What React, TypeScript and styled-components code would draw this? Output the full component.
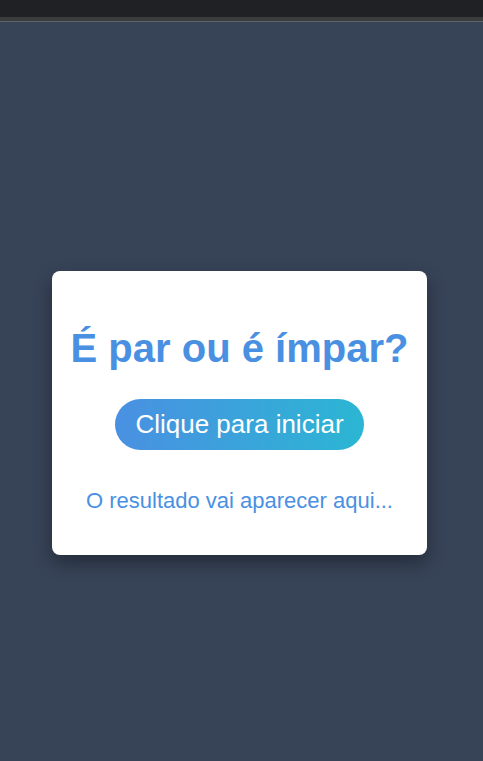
import React from "react";
import styled, { createGlobalStyle } from "styled-components";

const Global = createGlobalStyle`
  html, body { margin: 0; padding: 0; }
  body {
    background: #374357;
    font-family: "Liberation Sans", Arial, sans-serif;
    min-height: 761px;
  }
`;

const TopBar = styled.div`
  height: 17px;
  background: #202124;
`;

const TopBand = styled.div`
  height: 4px;
  background: #3a3b3d;
  border-bottom: 1px solid #626366;
`;

const Main = styled.main`
  display: flex;
  flex-direction: column;
  align-items: center;
  padding: 249px 4px 0 0;
`;

const Card = styled.section`
  width: 375px;
  box-sizing: border-box;
  background: #ffffff;
  border-radius: 8px;
  box-shadow: 0 8px 18px rgba(0, 0, 0, 0.35);
  padding: 54px 20px 42px;
  display: flex;
  flex-direction: column;
  align-items: center;
`;

const Title = styled.h1`
  margin: 0 0 28px;
  font-size: 40px;
  line-height: 46px;
  font-weight: 700;
  color: #4a90e2;
  white-space: nowrap;
`;

const StartButton = styled.button`
  border: none;
  border-radius: 26px;
  height: 51px;
  padding: 0 20px;
  background: linear-gradient(90deg, #4a90e2 0%, #2bb6d3 100%);
  color: #ffffff;
  font-family: "Liberation Sans", Arial, sans-serif;
  font-size: 26px;
  cursor: pointer;
`;

const Result = styled.p`
  margin: 38px 0 0;
  font-size: 22px;
  line-height: 25px;
  color: #4a90e2;
`;

export default function App() {
  return (
    <>
      <Global />
      <TopBar />
      <TopBand />
      <Main>
        <Card>
          <Title>É par ou é ímpar?</Title>
          <StartButton>Clique para iniciar</StartButton>
          <Result>O resultado vai aparecer aqui...</Result>
        </Card>
      </Main>
    </>
  );
}
